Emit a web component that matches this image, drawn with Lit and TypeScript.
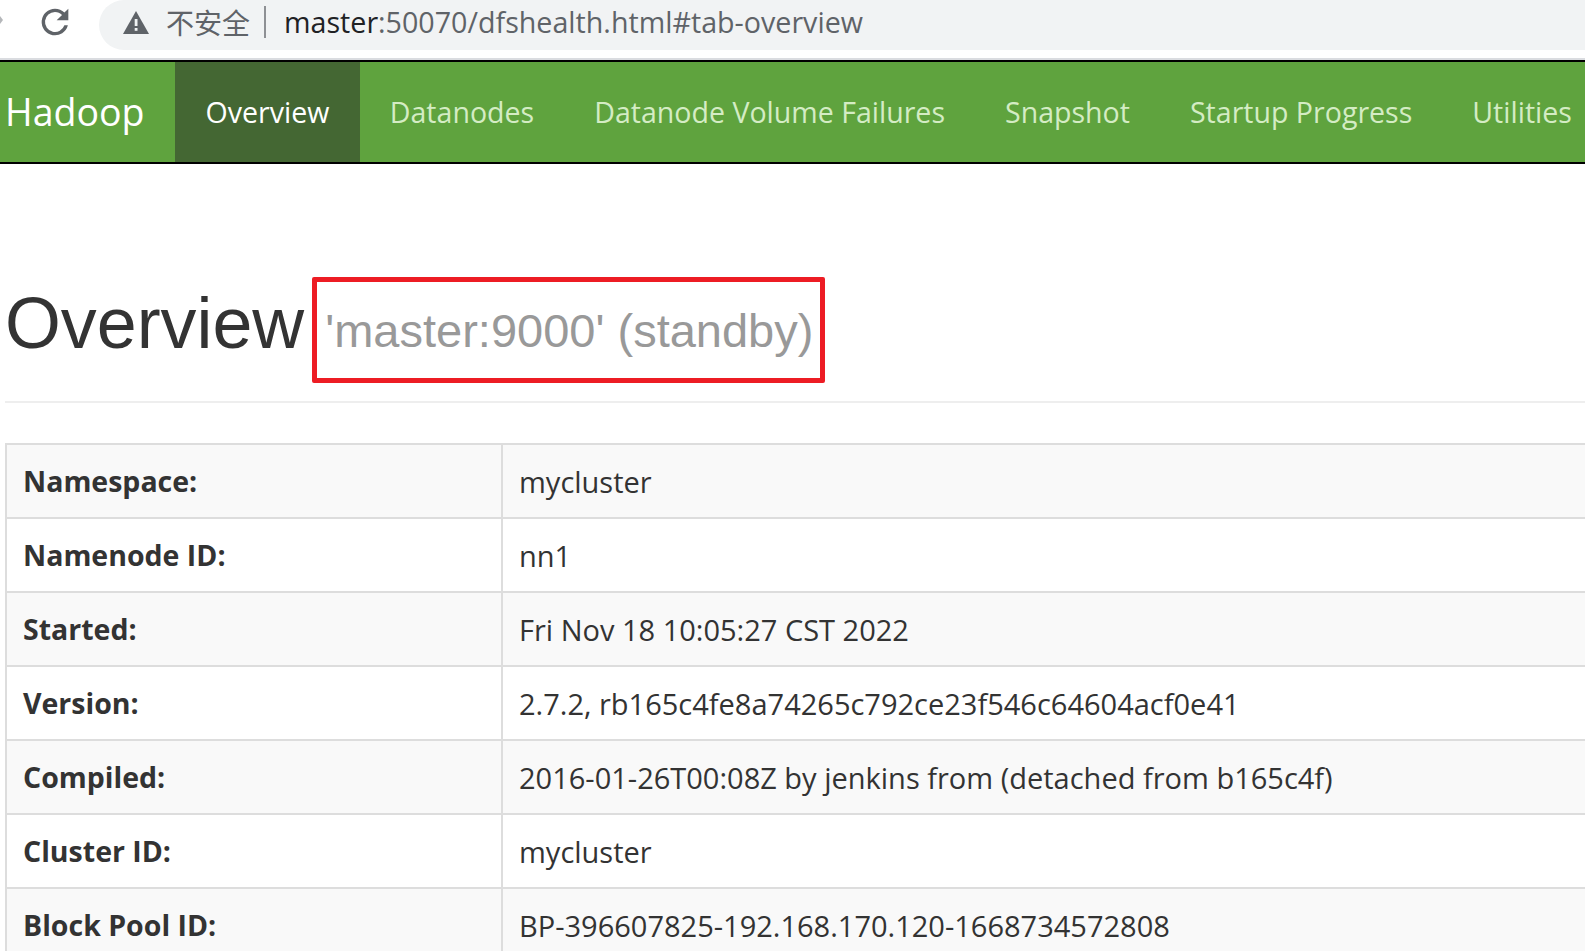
import { css, html, LitElement } from 'lit'
import { customElement } from 'lit/decorators.js'

const NAV_ITEMS = ['Overview', 'Datanodes', 'Datanode Volume Failures', 'Snapshot', 'Startup Progress', 'Utilities']

const ROWS: [string, string][] = [
  ['Namespace:', 'mycluster'],
  ['Namenode ID:', 'nn1'],
  ['Started:', 'Fri Nov 18 10:05:27 CST 2022'],
  ['Version:', '2.7.2, rb165c4fe8a74265c792ce23f546c64604acf0e41'],
  ['Compiled:', '2016-01-26T00:08Z by jenkins from (detached from b165c4f)'],
  ['Cluster ID:', 'mycluster'],
  ['Block Pool ID:', 'BP-396607825-192.168.170.120-1668734572808'],
]

@customElement('app-root')
export class AppRoot extends LitElement {
  static override styles = css`
    :host {
      display: block;
      width: 1585px;
      height: 951px;
      overflow: hidden;
      background: #fff;
      font-family: "Open Sans", "Noto Sans CJK SC", sans-serif;
      color: #333;
    }

    .chrome {
      display: flex;
      height: 60px;
      box-sizing: border-box;
      background: #fff;
    }

    .back {
      width: 3px;
      height: 8px;
      margin-top: 16px;
      background: #b5b7ba;
      clip-path: polygon(0 0, 100% 50%, 0 100%);
    }

    .reload {
      width: 40px;
      height: 40px;
      margin: 2px 0 0 32px;
      flex: none;
    }

    .pill {
      flex: 1;
      display: flex;
      align-items: center;
      box-sizing: border-box;
      height: 50px;
      margin-left: 24px;
      padding: 0 0 6px 24px;
      border-radius: 25px 0 0 25px;
      background: #f1f3f4;
      font-size: 28.65px;
      color: #5f6368;
      white-space: nowrap;
    }

    .warn {
      width: 26px;
      height: 23px;
      flex: none;
    }

    .insecure {
      margin-left: 17px;
      font-family: "Noto Sans CJK SC", sans-serif;
      font-size: 28px;
    }

    .sep {
      width: 2px;
      height: 32px;
      margin: 0 18px 0 14px;
      background: #8e9094;
    }

    .url {
      margin-bottom: 2px;
    }

    .host {
      color: #202124;
    }

    .navbar {
      display: flex;
      height: 100px;
      border-top: 2px solid #000;
      border-bottom: 2px solid #000;
      box-shadow: 0 -2px 0 #dadce0;
      background: #5fa33e;
      white-space: nowrap;
    }

    .brand {
      display: flex;
      flex: none;
      align-items: center;
      box-sizing: border-box;
      width: 175px;
      padding: 0 0 2px 5px;
      font-size: 37.5px;
      color: #fff;
    }

    .nav-link {
      display: flex;
      flex: none;
      align-items: center;
      padding: 0 30px 2px;
      font-size: 28.55px;
      color: #d4ecc4;
    }

    .nav-link.active {
      padding: 0 30.5px 2px;
      background: #446733;
      color: #fff;
    }

    .content {
      padding-left: 5px;
    }

    .page-header {
      display: flex;
      align-items: flex-start;
      height: 126px;
      margin-top: 111px;
      border-bottom: 2px solid #eee;
    }

    h1 {
      margin: 9px 0 0;
      font-family: "Liberation Sans", Arial, sans-serif;
      font-weight: 400;
      font-size: 71.8px;
      line-height: 79px;
      color: #333;
    }

    .sub {
      box-sizing: border-box;
      width: 513px;
      height: 106px;
      margin: 2px 0 0 8px;
      padding: 22px 0 0 8px;
      border: 5px solid #ed1c24;
      border-radius: 2px;
      font-family: "Liberation Sans", Arial, sans-serif;
      font-size: 47px;
      line-height: 54px;
      color: #999;
      white-space: nowrap;
    }

    table {
      width: 1700px;
      margin-top: 40px;
      border-collapse: collapse;
      font-size: 29px;
    }

    td, th {
      box-sizing: border-box;
      height: 74px;
      padding: 0 16px;
      border: 2px solid #ddd;
      text-align: left;
      white-space: nowrap;
    }

    th {
      width: 496px;
      font-size: 28.5px;
      font-weight: 700;
    }

    tr:nth-child(odd) {
      background: #f9f9f9;
    }
  `

  override render() {
    return html`
      <div class="chrome">
        <div class="back"></div>
        <svg class="reload" viewBox="0 0 24 24" fill="#5f6368">
          <path d="M17.65 6.35A7.96 7.96 0 0 0 12 4a8 8 0 1 0 7.73 10h-2.08A6 6 0 1 1 12 6c1.66 0 3.14.69 4.22 1.78L13 11h7V4l-2.35 2.35z"></path>
        </svg>
        <div class="pill">
          <svg class="warn" viewBox="0 0 26 23">
            <path fill="#5f6368" d="M13 0 26 23H0z"></path>
            <rect x="11.7" y="8" width="2.8" height="7" fill="#f1f3f4"></rect>
            <rect x="11.7" y="17" width="2.8" height="2.8" fill="#f1f3f4"></rect>
          </svg>
          <span class="insecure">不安全</span>
          <span class="sep"></span>
          <span class="url"><span class="host">master</span>:50070/dfshealth.html#tab-overview</span>
        </div>
      </div>
      <nav class="navbar">
        <div class="brand">Hadoop</div>
        ${NAV_ITEMS.map(
          (item, i) => html`<div class="nav-link ${i === 0 ? 'active' : ''}">${item}</div>`,
        )}
      </nav>
      <div class="content">
        <div class="page-header">
          <h1>Overview</h1>
          <div class="sub">'master:9000' (standby)</div>
        </div>
        <table>
          <tbody>
            ${ROWS.map(
              ([label, value]) => html`<tr><th>${label}</th><td>${value}</td></tr>`,
            )}
          </tbody>
        </table>
      </div>
    `
  }
}

declare global {
  interface HTMLElementTagNameMap {
    'app-root': AppRoot
  }
}
